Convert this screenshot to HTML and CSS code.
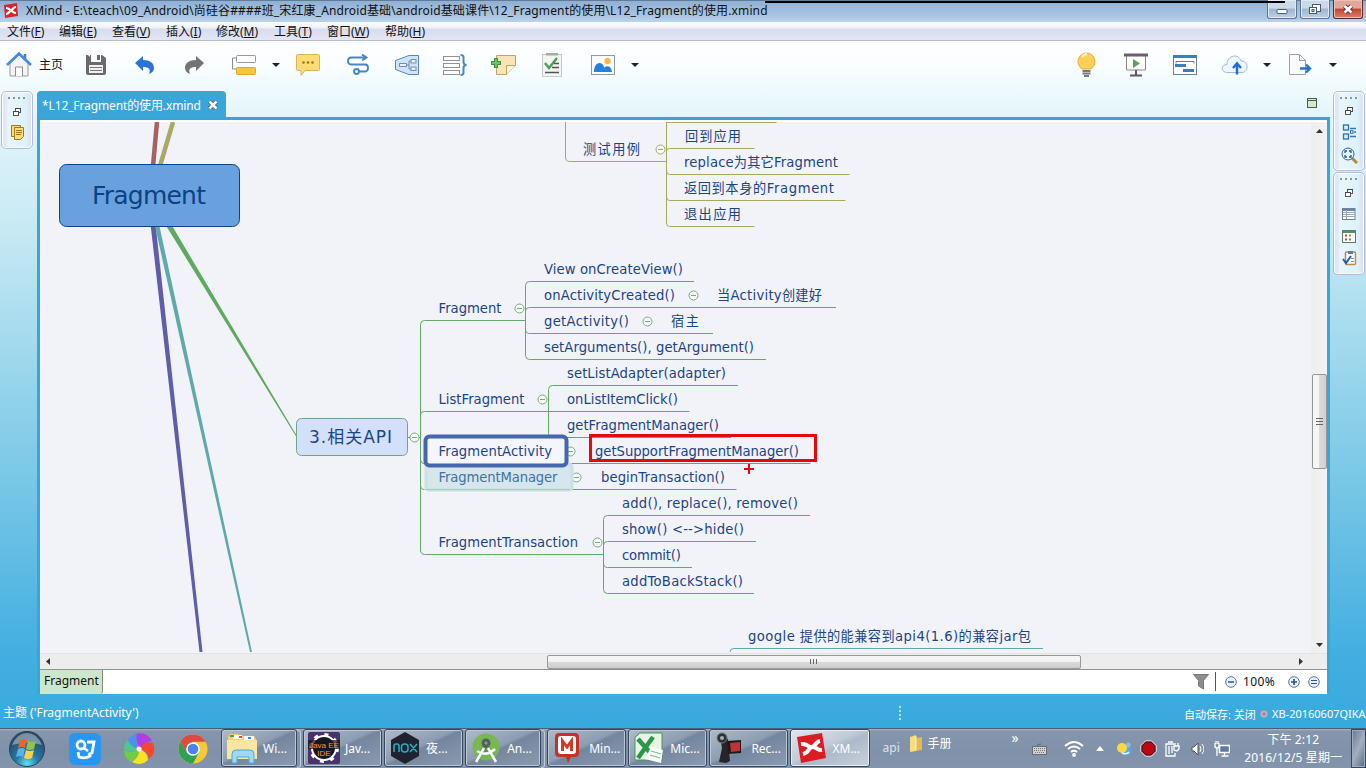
FILE: index.html
```html
<!DOCTYPE html>
<html lang="zh-CN">
<head>
<meta charset="utf-8">
<title>XMind</title>
<link rel="stylesheet" href="styles.css">
</head>
<body>
<header class="titlebar">
  <svg class="app-icon" width="16" height="18" viewBox="0 0 16 18"><path d="M1 3 14 1l1 13L2 16Z" fill="#d6262c"/><path d="M3 6c3 0 3 2 5 2s2-3 5-3M3 12c3 0 3-3 5-3s2 2 5 2" fill="none" stroke="#fff" stroke-width="2.2"/></svg>
  <span class="title-text">XMind - E:\teach\09_Android\尚硅谷####班_宋红康_Android基础\android基础课件\12_Fragment的使用\L12_Fragment的使用.xmind</span>
  <div class="window-buttons">
    <span class="wb"><svg width="28" height="18" viewBox="0 0 28 18"><rect x="9" y="9.500" width="10" height="4" rx="1" fill="#fff" stroke="#4b5a70"/></svg></span>
    <span class="wb"><svg width="28" height="18" viewBox="0 0 28 18"><g fill="#fff" stroke="#4b5a70"><rect x="11.500" y="4.500" width="8" height="7"/><rect x="8.500" y="7.500" width="7" height="6"/><rect x="11" y="9.500" width="2" height="2" fill="#8aa3c2"/></g></svg></span>
    <span class="wb close"><svg width="28" height="18" viewBox="0 0 28 18"><path d="m10.500 6 7 6.500m0-6.500-7 6.500" stroke="#59373c" stroke-width="4.500"/><path d="m10.500 6 7 6.500m0-6.500-7 6.500" stroke="#fff" stroke-width="2.600"/></svg></span>
  </div>
  <i class="record-line"></i>
</header>
<nav class="menubar">
  <span>文件(<u>F</u>)</span><span>编辑(<u>E</u>)</span><span>查看(<u>V</u>)</span><span>插入(<u>I</u>)</span><span>修改(<u>M</u>)</span><span>工具(<u>T</u>)</span><span>窗口(<u>W</u>)</span><span>帮助(<u>H</u>)</span>
</nav>
<div class="shell">
<div class="toolbar">
  <div class="tools tools-left">
    <svg width="26" height="28" viewBox="0 0 26 28"><path d="M4 12v13h18V12L13 4Z" fill="#f4f4f4" stroke="#9a9a9a"/><path d="M9.500 25v-9h7v9" fill="#fff" stroke="#8c8c8c"/><path d="M19 3v6" stroke="#3c82c8" stroke-width="2.500"/><path d="M1 14 13 2.500 25 14" fill="none" stroke="#3f8be0" stroke-width="2.600"/></svg>
    <span class="home-label">主页</span>
    <svg width="22" height="22" viewBox="0 0 22 22"><path d="M1 1h2l2 2V1h12l4 3v15q0 2-2 2H3q-2 0-2-2Z" fill="#6b6b6b"/><path d="M6 0h10v8H6Z" fill="#fafafa"/><path d="M12 1h3v5h-3Z" fill="#6b6b6b"/><path d="M4 11h14v8H4Z" fill="#f3f3f3"/><path d="M5 13.500h12M5 16.500h12" stroke="#777"/></svg>
    <svg width="20" height="20" viewBox="0 0 20 20"><path d="M0 8 8 1v4c7 0 11 3 11 8 0 3-2 5-5 6 2-5 0-7-6-7v4Z" fill="#2d73d6"/></svg>
    <svg width="20" height="20" viewBox="0 0 20 20"><path d="M20 8 12 1v4C5 5 1 8 1 13c0 3 2 5 5 6-2-5 0-7 6-7v4Z" fill="#747474"/></svg>
    <svg width="26" height="22" viewBox="0 0 26 22"><path d="M6 4H1.500v11H5" fill="none" stroke="#8b8b8b"/><rect x="5.500" y="1.500" width="19" height="7" rx="1" fill="#fff" stroke="#999"/><rect x="5.500" y="13.500" width="19" height="7" rx="1" fill="#fdc33c" stroke="#e0a52c"/></svg>
    <svg width="10" height="6"><path d="M1 1h8L5 5Z" fill="#222"/></svg>
    <svg width="26" height="24" viewBox="0 0 26 24"><path d="M2.500 1.500h21q1 0 1 1v14q0 1-1 1H10l-4 5v-5H2.500q-1 0-1-1v-14q0-1 1-1Z" fill="#ffdc74" stroke="#dfb457"/><g fill="#9a7428"><circle cx="8.500" cy="9.500" r="1.300"/><circle cx="13" cy="9.500" r="1.300"/><circle cx="17.500" cy="9.500" r="1.300"/></g></svg>
    <svg width="24" height="22" viewBox="0 0 24 22" fill="none" stroke="#4387c8" stroke-width="1.900"><path d="M20 3.500H5.500Q2 3.500 2 7t3.500 3.500H19q3 0 3 3.500t-3.500 3.500H13M16 .5l4.500 3L16 6.500"/><circle cx="10.500" cy="17.500" r="2.500" fill="#fff"/></svg>
    <svg width="26" height="22" viewBox="0 0 26 22"><path d="M1.500 6.500 15 1.500h9.500v19H15l-13.500-5Z" fill="#d0e4f8" stroke="#5687bb"/><g fill="#e6f0fa" stroke="#6d8fb5"><path d="M12 11h3m3-4h-3v8h3" fill="none"/><rect x="5.500" y="9.500" width="7" height="3"/><rect x="17" y="5.500" width="5" height="3.500"/><rect x="17" y="13" width="5" height="3.500"/></g></svg>
    <svg width="26" height="24" viewBox="0 0 26 24" fill="none"><g stroke="#929292" fill="#fff"><rect x="1.500" y="3.500" width="16" height="4"/><rect x="1.500" y="10.500" width="16" height="4"/><rect x="1.500" y="17.500" width="16" height="4"/></g><path d="M18.500 2q3 0 3 2v5q0 3 3 3-3 0-3 3v5q0 2-3 2" stroke="#4387c8" stroke-width="2"/></svg>
    <svg width="26" height="24" viewBox="0 0 26 24"><path d="M5.500 2.500h19v10l-9 9h-10Z" fill="#f8e4b5" stroke="#c1a568"/><path d="M15.500 21.500v-9h9" fill="#fff3d4" stroke="#c1a568"/><path d="M5 5v10M0 10h10" stroke="#3f9147" stroke-width="4"/><path d="M5 6v8M1 10h8" stroke="#67c36a" stroke-width="2"/></svg>
    <svg class="tool-task" width="22" height="26" viewBox="0 0 22 26"><rect x="1.500" y="2.500" width="19" height="22" fill="#f4f4f2" stroke="#c8c8c8"/><path d="M5 1h12v2.500H5Z" fill="#b1aa9b"/><path d="m4 11 4 5 8-10" fill="none" stroke="#48a054" stroke-width="2.400"/><path d="M13 11.500h5M11 15.500h7M4 20.500h14" stroke="#555" stroke-width="1.300"/></svg>
    <svg width="26" height="22" viewBox="0 0 26 22"><rect x="1.500" y="1.500" width="23" height="19" fill="#fafdff" stroke="#8e9aa4"/><circle cx="17.500" cy="7" r="3.200" fill="#fdb948"/><path d="M4 18c0-5 2-9 5.500-9 3 0 4 3 5 4.500C18 10 22 14 22 18Z" fill="#287fdc"/></svg>
    <svg width="10" height="6"><path d="M1 1h8L5 5Z" fill="#222"/></svg>
  </div>
  <div class="tools tools-right">
    <svg width="22" height="26" viewBox="0 0 22 26"><path d="M6 17C4 15 2 13 2 9.500a8.500 8.500 0 0 1 17 0c0 3.500-2 5.500-4 7.500Z" fill="#ffcf56" stroke="#e6a83c"/><path d="M6 5q2-3 5-3" fill="none" stroke="#fff3c4" stroke-width="2"/><path d="M6.500 19h8M6.500 21.500h8M8 24h5" stroke="#75787c" stroke-width="2"/></svg>
    <svg width="26" height="24" viewBox="0 0 26 24"><path d="M3.500 3v14h19V3" fill="#fff" stroke="#8b8580"/><path d="M1 2h24" stroke="#6b5f68" stroke-width="3"/><path d="m10 6 7 4.500-7 4.500Z" fill="#55a45b"/><path d="M13 17v5M7 22.500h12" stroke="#5f5a60" stroke-width="2"/></svg>
    <svg width="26" height="22" viewBox="0 0 26 22"><rect x="1.500" y="1.500" width="23" height="19" fill="#fff" stroke="#68809a"/><path d="M1 2.500h24" stroke="#3d7db8" stroke-width="3"/><path d="M4 9.500V7.500h18v2" fill="none" stroke="#777"/><path d="M3 11.500h11M11 16.500h11" stroke="#3c7dbb" stroke-width="3"/></svg>
    <svg width="28" height="22" viewBox="0 0 28 22"><path d="M7 18.500c-8 0-7-8-1-8C6 1 18-1 20 7c8 0 8 11 1 11.500Z" fill="#edf6fc" stroke="#9dbbd0"/><path d="M16 20.500V11" stroke="#2868d9" stroke-width="2.500"/><path d="m12 14 4-4.500 4 4.500" fill="none" stroke="#2868d9" stroke-width="2.500"/></svg>
    <svg width="10" height="6"><path d="M1 1h8L5 5Z" fill="#222"/></svg>
    <svg width="24" height="24" viewBox="0 0 24 24"><path d="M1.500 1.500h10l6 6v14h-16Z" fill="#fafafa" stroke="#a0a0a0"/><path d="M11.500 1.500v6h6" fill="none" stroke="#a0a0a0"/><path d="M12 15.500h10m-4-4 4 4-4 4" fill="none" stroke="#2371c4" stroke-width="2.400"/></svg>
    <svg width="10" height="6"><path d="M1 1h8L5 5Z" fill="#222"/></svg>
  </div>
</div>
<div class="workspace">
  <aside class="rail">
    <div class="panel panel-left">
      <i class="grip"></i>
      <svg width="10" height="10" viewBox="0 0 10 10"><g fill="#fff" stroke="#555"><rect x="3.500" y="1.500" width="5" height="4"/><rect x="1.500" y="4.500" width="5" height="4"/></g><path d="M3 1.500h6M1 4.500h6" stroke="#444"/></svg>
      <svg width="15" height="16" viewBox="0 0 15 16"><g fill="#ffdb78" stroke="#a4771f"><path d="M1.500.5h9v11h-9Z"/><path d="M4.500 2.500h9v9l-3 3h-6Z"/></g><path d="M6 5.500h6M6 7.500h6M6 9.500h5" stroke="#a4771f"/></svg>
    </div>
  </aside>
  <main class="editor">
    <div class="tabs">
      <div class="tab"><span>*L12_Fragment的使用.xmind</span><svg width="12" height="12" viewBox="0 0 12 12"><path d="m2.500 2.500 7 7m0-7-7 7" stroke="#57594f" stroke-width="4"/><path d="m2.500 2.500 7 7m0-7-7 7" stroke="#fff" stroke-width="2.500"/></svg></div>
      <svg class="maximize" width="10" height="10" viewBox="0 0 10 10"><rect x=".5" y=".5" width="9" height="9" fill="#d3e8cd" stroke="#4f5d50"/><path d="M1 2.500h8" stroke="#4f5d50"/></svg>
    </div>
    <div class="frame">
      <div class="view">
        <svg class="map" width="1271" height="530" viewBox="40 122 1271 530">
          <g fill="none">
            <path d="m157 122-4 44" stroke="#a8605f" stroke-width="4.500"/>
            <path d="m173 122-13 44" stroke="#a9a964" stroke-width="4.500"/>
            <path d="M150.500 224h5l47 428h-3Z" fill="#5f5caa"/>
            <path d="M154.500 224h4.500l93 428h-2Z" fill="#5fa9aa"/>
            <path d="M165 224h6l126 212v2Z" fill="#5faa60"/>
            <g stroke="#a5a85f"><path d="M565.500 122v35q0 4.500 4 4.500h97M666.500 122v101q0 3.500 3 3.500h85M666.500 122.500h110M666.500 151q0-2.500 3-2.500h85M666.500 171q0 3.500 3 3.500h180M666.500 197q0 3.500 3 3.500h176"/></g>
            <g stroke="#63a865">
              <path d="M408 437.500h13M525.500 320.500h-101q-4 0-4 4V550q0 4.500 4 4.500h179M420.500 415q0-3.500 4-3.500h265M420.500 459q0 4.500 4 4.500h386M420.500 485q0 4.500 4 4.500h312"/>
              <path d="M694 281.500H529.500q-4 0-4 4v70q0 4 4 4H766M525.500 311q0-3.500 4-3.500H836M525.500 329q0 4.500 4 4.500H713"/>
              <path d="M738 385.500H552.500q-4 0-4 4v44q0 4 4 4H731"/>
              <path d="M810 515.500H607.500q-4 0-4 4v70q0 4 4 4H754M603.500 545q0-3.500 4-3.500H756M603.500 563q0 4.500 4 4.500H692"/>
            </g>
            <path d="M730 652q0-3.500 4-3.500h309" stroke="#5fa9aa"/>
          </g>
          <rect x="59.500" y="164.500" width="180" height="62" rx="7" fill="#69a1df" stroke="#0b4487"/>
          <rect x="296.500" y="418.500" width="111" height="37" rx="5" fill="#d2e0fc" stroke="#6fa487"/>
          <g class="folds" stroke="#78aa7c" fill="#f6f8f9">
            <circle cx="660.500" cy="149.500" r="4.500" stroke="#a5a85f"/><path d="M658 149.500h5" stroke="#a5a85f"/>
            <circle cx="414.500" cy="437.500" r="4.500"/><path d="M412 437.500h5"/>
            <circle cx="519.500" cy="308.500" r="4.500"/><path d="M517 308.500h5"/>
            <circle cx="693.500" cy="295.500" r="4.500"/><path d="M691 295.500h5"/>
            <circle cx="647.500" cy="321.500" r="4.500"/><path d="M645 321.500h5"/>
            <circle cx="542.500" cy="399.500" r="4.500"/><path d="M540 399.500h5"/>
            <circle cx="570.500" cy="451.500" r="4.500"/><path d="M568 451.500h5"/>
            <circle cx="576.500" cy="477.500" r="4.500"/><path d="M574 477.500h5"/>
            <circle cx="597.500" cy="542.500" r="4.500"/><path d="M595 542.500h5"/>
          </g>
          <rect x="426" y="464" width="146" height="26" rx="3" fill="#d6e6ec" stroke="#cbdfe7" stroke-width="3"/>
          <path d="M424 489.500h146" stroke="#a9cdb8"/>
          <rect x="425.500" y="436.500" width="141" height="29" rx="4" fill="#f5f5fc" stroke="#4267ac" stroke-width="4"/>
          <text class="root" x="92" y="204" textLength="114">Fragment</text>
          <text class="main-topic" x="309" y="443" textLength="83">3.相关API</text>
          <g class="topic">
            <text x="583" y="154" textLength="57">测试用例</text>
            <text x="685" y="141" textLength="56">回到应用</text>
            <text x="684" y="167" textLength="154">replace为其它Fragment</text>
            <text x="684" y="193" textLength="150">返回到本身的Fragment</text>
            <text x="684" y="219" textLength="57">退出应用</text>
            <text x="544" y="274" textLength="139">View onCreateView()</text>
            <text x="544" y="300" textLength="131">onActivityCreated()</text>
            <text x="717" y="300" textLength="105">当Activity创建好</text>
            <text x="438.500" y="313" textLength="63">Fragment</text>
            <text x="544" y="326" textLength="85">getActivity()</text>
            <text x="671" y="326" textLength="28">宿主</text>
            <text x="544" y="352" textLength="210">setArguments(), getArgument()</text>
            <text x="567" y="378" textLength="159">setListAdapter(adapter)</text>
            <text x="438.500" y="404" textLength="86">ListFragment</text>
            <text x="567" y="404" textLength="111">onListItemClick()</text>
            <text x="567" y="430" textLength="152">getFragmentManager()</text>
            <text x="438.500" y="456" textLength="113.500">FragmentActivity</text>
            <text x="595" y="456" textLength="204">getSupportFragmentManager()</text>
            <text x="438.500" y="482" textLength="119" class="ghost">FragmentManager</text>
            <text x="601" y="482" textLength="124">beginTransaction()</text>
            <text x="622" y="508" textLength="176">add(), replace(), remove()</text>
            <text x="622" y="534" textLength="122">show() &lt;--&gt;hide()</text>
            <text x="438.500" y="547" textLength="139.500">FragmentTransaction</text>
            <text x="622" y="560" textLength="59">commit()</text>
            <text x="622" y="586" textLength="121">addToBackStack()</text>
            <text x="748" y="641" textLength="283">google 提供的能兼容到api4(1.6)的兼容jar包</text>
          </g>
          <rect x="590.500" y="435.500" width="225" height="25" fill="none" stroke="#e5080d" stroke-width="3"/>
          <path d="M749 464v10M744 469h10" stroke="#e5080d" stroke-width="2"/>
        </svg>
        <div class="vscroll">
          <svg width="7" height="4"><path d="M0 4 3.500 0 7 4Z" fill="#333"/></svg>
          <div class="vthumb"><i></i></div>
          <svg width="7" height="4"><path d="M0 0h7L3.500 4Z" fill="#333"/></svg>
        </div>
      </div>
      <div class="hscroll">
        <svg width="4" height="7"><path d="M4 0v7L0 3.500Z" fill="#333"/></svg>
        <div class="hthumb"><i></i></div>
        <svg width="4" height="7"><path d="M0 0v7l4-3.500Z" fill="#333"/></svg>
      </div>
      <div class="sheetbar">
        <span class="sheet">Fragment</span>
        <div class="zoombar">
          <svg width="16" height="16" viewBox="0 0 16 16"><path d="M.5.500h15l-5 6V15l-5-3V6.500Z" fill="#8d8d8d" stroke="#777"/></svg>
          <i class="sep"></i>
          <svg width="12" height="12" viewBox="0 0 12 12"><circle cx="6" cy="6" r="5.300" fill="#eaf3fc" stroke="#5474a4"/><path d="M3 6h6" stroke="#2b5592" stroke-width="1.500"/></svg>
          <span class="percent">100%</span>
          <svg width="12" height="12" viewBox="0 0 12 12"><circle cx="6" cy="6" r="5.300" fill="#eaf3fc" stroke="#5474a4"/><path d="M3 6h6M6 3v6" stroke="#2b5592" stroke-width="1.700"/></svg>
          <svg class="fit" width="12" height="12" viewBox="0 0 12 12"><circle cx="6" cy="6" r="5.300" fill="#eaf3fc" stroke="#5474a4"/><path d="M3 4.500h6M3 7.500h6" stroke="#2b5592"/></svg>
        </div>
      </div>
    </div>
  </main>
  <aside class="rail rail-right">
    <div class="panel panel-outline">
      <i class="grip"></i>
      <svg width="10" height="10" viewBox="0 0 10 10"><g fill="#fff" stroke="#555"><rect x="3.500" y="1.500" width="5" height="4"/><rect x="1.500" y="4.500" width="5" height="4"/></g><path d="M3 1.500h6M1 4.500h6" stroke="#444"/></svg>
      <svg width="15" height="16" viewBox="0 0 15 16"><g fill="#d9f1fc" stroke="#2c6fb2" stroke-width="1.300"><rect x="1.500" y="1" width="5" height="5"/><rect x="1.500" y="10" width="5" height="5"/></g><path d="M8 4.500h6M8 12.500h6M12 8h2" stroke="#3079b5" stroke-width="1.300"/><rect x="8.500" y="6.800" width="2.500" height="2.500" fill="#fff" stroke="#2b6fab"/></svg>
      <svg width="17" height="17" viewBox="0 0 17 17"><path d="m11 11 5 5" stroke="#b38a3c" stroke-width="3"/><circle cx="7" cy="7" r="6" fill="#e4f4fc" stroke="#38689b"/><path d="M4 6V4h2m2 0h2v2m0 2v2H8M6 10H4V8" fill="none" stroke="#245594" stroke-width="1.300"/></svg>
    </div>
    <div class="panel panel-views">
      <i class="grip"></i>
      <svg width="10" height="10" viewBox="0 0 10 10"><g fill="#fff" stroke="#555"><rect x="3.500" y="1.500" width="5" height="4"/><rect x="1.500" y="4.500" width="5" height="4"/></g><path d="M3 1.500h6M1 4.500h6" stroke="#444"/></svg>
      <svg width="14" height="12" viewBox="0 0 14 12"><rect x=".5" y=".5" width="12.500" height="11" fill="#fff" stroke="#6c8297"/><path d="M1 2h12" stroke="#6786a3" stroke-width="2"/><path d="M1 4.500h12M1 6.500h12M1 8.500h12M4.500 2v9" stroke="#9aa6ba"/></svg>
      <svg width="14" height="13" viewBox="0 0 14 13"><rect x=".5" y=".5" width="13" height="12" fill="#fff" stroke="#5a8268"/><path d="M1 2h12" stroke="#4d9267" stroke-width="2"/><path d="M3 5.500h2M3 9.500h2" stroke="#d33" stroke-width="2"/><path d="M7 5.500h2" stroke="#e57b2a" stroke-width="2"/><path d="M7 9.500h2" stroke="#36a35c" stroke-width="2"/></svg>
      <svg width="15" height="16" viewBox="0 0 15 16"><rect x="3.500" y="2" width="10" height="12.500" rx="1" fill="#fafcff" stroke="#c08b43" stroke-width="1.500"/><path d="M6 1h5v3H6Z" fill="#597ea0"/><path d="m1 9 3 4 5-7" fill="none" stroke="#215ca6" stroke-width="2"/><path d="M9 8.500h3M9 11.500h3" stroke="#7792ad"/></svg>
    </div>
  </aside>
</div>
<div class="statusbar">
  <span class="selection">主题 ('FragmentActivity')</span>
  <i class="status-grip"></i>
  <span class="autosave">自动保存: 关闭</span><i class="dot"></i><span class="host">XB-20160607QIKA</span>
</div>
</div>
<footer class="taskbar">
  <div class="pinned">
    <svg width="38" height="38" viewBox="0 0 38 38"><defs><radialGradient id="orb" cx="50%" cy="92%" r="80%"><stop offset="0" stop-color="#5fe0f4"/><stop offset=".4" stop-color="#247aa8"/><stop offset="1" stop-color="#2b4863"/></radialGradient></defs><circle cx="19" cy="19" r="17.500" fill="url(#orb)" stroke="#27425c"/><path d="M4 15Q9 3 19 3t15 12q-14-5-30 0Z" fill="#c5d8e3" opacity=".5"/><path d="M12 10q4-2 7 0l-2 8q-3-2-7 0Z" fill="#e8652c"/><path d="M20 11q4 2 8 0l-2 8q-4 2-8 0Z" fill="#8cc548"/><path d="M10 19q4-2 7 0l-2 8q-3-2-7 0Z" fill="#58b3ea"/><path d="M18 20q4 2 8 0l-2 8q-4 2-8 0Z" fill="#fbd14b"/></svg>
    <svg width="34" height="32" viewBox="0 0 34 32"><rect x="1" width="32" height="32" rx="6" fill="#2696f0"/><g fill="none" stroke="#fff" stroke-width="2.800"><circle cx="13" cy="12" r="4"/><path d="m16 15 4 3M19 9h7l-2 11-3 1M10 19l1 5q6 2 11-1l-1-3"/></g></svg>
    <svg width="32" height="32" viewBox="-16 -16 32 32"><path d="M0 0-4-15Q8-18 13-8Q8-8 0 0Z" fill="#b03ee4"/><path d="M0 0Q6-9 14-6Q18 4 10 10Q9 2 0 0Z" fill="#f3482f"/><path d="M0 0Q9 3 9 11Q2 18-7 13Q0 8 0 0Z" fill="#fbe124"/><path d="M0 0Q0 10-8 13Q-15 9-15 1Q-7 5 0 0Z" fill="#70cc45"/><path d="M0 0Q-8 4-15 0Q-15-5-11-9Q-7-2 0 0Z" fill="#4fc98a"/><path d="M0 0Q-9-2-11-9Q-8-14-2-15Q-4-6 0 0Z" fill="#4b91ee"/><circle r="2.500" fill="#fff"/></svg>
    <svg width="30" height="30" viewBox="-15 -15 30 30"><circle r="14.500" fill="#f6c935"/><path d="M-12.600-7.200A14.500 14.500 0 0 1 12.600-7.200H0L-6 4Z" fill="#de4b3f"/><path d="M-12.600-7.200A14.500 14.500 0 0 0 0 14.500L6 3.500H-6Z" fill="#30a053"/><circle r="6.800" fill="#fff"/><circle r="5.300" fill="#4686ec"/></svg>
  </div>
  <div class="tasks">
    <div class="task stacked"><svg width="32" height="32" viewBox="0 0 32 32"><path d="M2 5 4 2h8l2 2h14l2 3v20H2Z" fill="#f0cf76"/><path d="M7 3h9v4H7ZM18 4h10v4H18Z" fill="#f9fafb"/><path d="M4 3h4v2H4Z" fill="#4aa052"/><path d="M13 4h3v2h-3Z" fill="#d24f43"/><path d="M22 5h3v2h-3Z" fill="#3b8fd2"/><path d="M1 8h30v19H1Z" fill="#fae6a0"/><path d="M6 31v-9q0-4 4-4h14q4 0 4 4v9h-5v-6H11v6Z" fill="#9bd9f5" stroke="#4fa9d6"/></svg><span>Wi...</span></div>
    <div class="task"><svg width="32" height="32" viewBox="0 0 32 32"><rect width="32" height="32" rx="2" fill="#493269"/><circle cx="16" cy="16" r="13.500" fill="none" stroke="#fff" stroke-width="3" stroke-dasharray="4 6.600"/><circle cx="16" cy="16" r="12" fill="#1a1722" stroke="#fff" stroke-width="2"/><rect y="8" width="32" height="9" fill="#1a1722" opacity=".75"/><text class="jee" x="16" y="15.500">Java EE</text><text class="jee" x="16" y="24">IDE</text></svg><span>Jav...</span></div>
    <div class="task"><svg width="32" height="32" viewBox="0 0 32 32"><path d="m16 0 14 8v16l-14 8-14-8V8Z" fill="#20232f"/><g fill="none" stroke="#2aa9b8" stroke-width="1.600"><path d="M5 20v-6q0-2 2-2h1q2 0 2 2v6M21 12l7 8m0-8-7 8"/><rect x="12.500" y="12" width="6.500" height="8" rx="3"/></g></svg><span>夜...</span></div>
    <div class="task stacked"><svg width="32" height="32" viewBox="0 0 32 32"><circle cx="16" cy="15" r="13.500" fill="#79b850"/><path d="m16 8 8 15-8-2-8 2Z" fill="#4b5d50" opacity=".5"/><path d="m14 16-8 14M18 16l8 14M7 19q9 6 18-2" stroke="#f8fafa" stroke-width="2.600" fill="none"/><circle cx="16" cy="11" r="4.500" fill="#555f62"/><circle cx="16" cy="11" r="1.500" fill="#87ab72"/></svg><span>An...</span></div>
    <div class="task"><svg width="32" height="32" viewBox="0 0 32 32"><path d="M7 1h16q4 0 4 4v16q0 4-4 4h-4l-3 6-2-6H7q-4 0-4-4V5q0-4 4-4Z" fill="#c93025"/><rect x="6" y="4" width="18" height="18" rx="3" fill="#fff"/><path d="M10.500 19V9l4.500 6 4.500-6v10" fill="none" stroke="#cf3a28" stroke-width="3"/></svg><span>Min...</span></div>
    <div class="task"><svg width="32" height="32" viewBox="0 0 32 32"><path d="M5 3q0-2 2-2h22v27H2V5Z" fill="#e7f4e5" stroke="#489457"/><path d="m5 7 16 18M20 5 5 26" stroke="#2b964a" stroke-width="4.500"/><path d="m18 15 12 3-2 13-16-4Z" fill="#f7fcf6"/><path d="m18 19 10 3m-11 1 10 3" stroke="#80b584"/></svg><span>Mic...</span></div>
    <div class="task"><svg width="32" height="32" viewBox="0 0 32 32"><path d="m6 5 8 2 2 22-4 2-7-1 3-14Z" fill="#252528"/><circle cx="8" cy="6" r="5" fill="#303034" stroke="#777"/><circle cx="8" cy="6" r="2" fill="#a9aeb4"/><path d="m13 9 14-1v13l-13 1Z" fill="#1c1c20"/><path d="m16 11 10-1v9l-9 1Z" fill="#c53234"/></svg><span>Rec...</span></div>
    <div class="task active"><svg width="32" height="32" viewBox="0 0 32 32"><path d="m2 5 25-4 4 25-25 5Z" fill="#d91d22"/><path d="M6 12c7-1 7 4 11 3s3-5 8-6M8 22c6-1 5-6 9-7s5 4 10 3" fill="none" stroke="#fff" stroke-width="4"/></svg><span>XM...</span></div>
  </div>
  <div class="deskband"><span class="api">api</span><svg width="14" height="18" viewBox="0 0 14 18"><path d="m1 2 6-2v16l-6 1Z" fill="#f7dc82"/><path d="m7 3 6-1v13l-6 1Z" fill="#e0bd50"/><path d="M7 1v14" stroke="#fff2bc"/></svg><span>手册</span></div>
  <div class="tray">
    <span class="more">»</span>
    <svg width="15" height="12" viewBox="0 0 15 12"><path d="M5 3q0-2 4-2" fill="none" stroke="#666"/><rect x=".5" y="3.500" width="14" height="8" fill="#d0d2d5" stroke="#696c70"/><path d="M2 5.500h11M2 7.500h11M3 9.500h9" stroke="#777" stroke-dasharray="1 1"/></svg>
    <svg width="20" height="18" viewBox="0 0 20 18" fill="none" stroke="#fff" stroke-width="1.800"><path d="M1 6Q10-2 19 6M4 9q6-5 12 0M7 12q3-2.500 6 0"/><circle cx="10" cy="15" r="1"/></svg>
    <svg width="8" height="5"><path d="M0 5 4 0l4 5Z" fill="#fff"/></svg>
    <svg width="16" height="16" viewBox="0 0 16 16"><circle cx="11" cy="10" r="4.500" fill="#58a9e6"/><circle cx="12" cy="4" r="2.500" fill="#83c0ec"/><circle cx="6" cy="7" r="5" fill="#fdd748"/><path d="M6 12q5 2 7-1" stroke="#e6f3fb" stroke-width="1.500" fill="none"/></svg>
    <svg width="17" height="17" viewBox="0 0 17 17"><path d="M5.500 1h6L16 5.500v6L11.500 16h-6L1 11.500v-6Z" fill="#bd0712" stroke="#fff"/><path d="M5.800 2h5.400L15 5.800v5.400L11.200 15H5.800L2 11.200V5.800Z" fill="none" stroke="#29181e"/></svg>
    <svg width="15" height="16" viewBox="0 0 15 16" fill="none" stroke="#fff" stroke-width="1.300"><path d="M9 3H1v12h9v-3M3 1h5M4 5v8M7 5v7M9 5h5v3l-2 2-3-1ZM10 2v3m3-3v3"/></svg>
    <svg width="13" height="14" viewBox="0 0 13 14"><path d="M1 5h2l4-4v12L3 9H1Z" fill="#fff" stroke="#555"/><path d="M9 4q2 3 0 6m2-8q4 5 0 10" stroke="#fff" fill="none"/></svg>
    <svg width="16" height="16" viewBox="0 0 16 16" fill="none" stroke="#fff"><rect x="5.500" y="4.500" width="10" height="7" stroke-width="1.500" fill="#60799b"/><path d="M10.500 12v2m-3 1h7M1 2v3q0 2 2 2v8M5 2v3q0 2-2 2M2 0v3m2-3v3" stroke-width="1.300"/></svg>
  </div>
  <div class="clock"><span>下午 2:12</span><span>2016/12/5 星期一</span></div>
  <div class="show-desktop"></div>
</footer>
</body>
</html>
```
FILE: styles.css
```css
* { box-sizing: border-box; }
html, body { margin: 0; width: 1366px; height: 768px; overflow: hidden; }
body { display: flex; flex-direction: column; font: 12px "Noto Sans", "Noto Sans CJK SC", sans-serif; color: #111; background: #fff; }
svg { display: block; flex: none; }
span { white-space: nowrap; }

.titlebar { position: relative; flex: none; height: 22px; display: flex; align-items: flex-start; background: linear-gradient(#34465e 0, #8fb0d4 1px, #9cbbdc 8px, #a9c5e2 16px, #bcd3ea); }
.app-icon { margin: 2px 0 0 3px; }
.title-text { margin-left: 7px; line-height: 21px; font-size: 12px; letter-spacing: .13px; }
.window-buttons { margin-left: auto; display: flex; gap: 3px; padding-right: 3px; }
.wb { width: 30px; height: 19px; border: 1px solid #5e7592; border-top: 0; border-radius: 0 0 3px 3px; background: linear-gradient(#ccd9e8 45%, #9db5d0 50%, #bdd1e6); box-shadow: inset 0 0 0 1px #e2ebf5; }
.wb.close { border-color: #582a34; background: linear-gradient(#e2a79b 45%, #c4432c 50%, #da806b); box-shadow: inset 0 0 0 1px #eec0b5; }
.record-line { position: absolute; left: 765px; top: 1px; width: 520px; height: 2px; background: #000; }

.menubar { flex: none; height: 19px; display: grid; grid-template-columns: 52px 53px 54px 50px 58px 53px 58px 53px; padding-left: 7px; background: linear-gradient(#fbfcfe, #eef0f9 6px, #d7dcee 7px, #e3e6f5); border-bottom: 1px solid #b6bccb; line-height: 19px; }
.menubar u { text-underline-offset: 1px; }

.shell { flex: 1; min-height: 0; display: flex; flex-direction: column; background: linear-gradient(#fff 0, #f9fdff 25px, #e2f5fb 78px, #c7e9f4 190px, #9ad6ec 330px, #66bfe4 500px, #43afe1 610px, #38a9dd); }
.toolbar { flex: none; height: 50px; display: flex; justify-content: space-between; align-items: flex-start; }
.tools { display: grid; align-items: center; justify-items: center; height: 48px; }
.tools-left { grid-template-columns: 38px 33px 49px 49px 49px 52px 12px 51px 49px 49px 47px 52px 47px 52px 12px; }
.tools-right { grid-template-columns: 49px 49px 49px 52px 12px 54px 39px; }
.tools-right svg:last-child { justify-self: start; margin-left: 1px; }
.tool-task { margin-left: -3px; }
.home-label { font-size: 12px; justify-self: start; padding-left: 1px; margin-top: -2px; }

.workspace { flex: none; height: 604px; display: flex; }
.rail { flex: none; width: 37px; }
.rail-right { width: 36px; padding-left: 3px; }
.panel { width: 32px; border: 1px solid #b3bbd6; border-radius: 5px; background: linear-gradient(90deg, #e1e7f7 4px, #e9f6fc 6px, #dcf2fa 24px, #dde4f6 27px); box-shadow: inset 0 0 0 1px #fff; display: flex; flex-direction: column; align-items: center; padding-top: 5px; }
.panel-left { margin-left: 1px; height: 58px; gap: 8px; }
.panel-outline { height: 80px; gap: 7px; }
.panel-outline svg:nth-of-type(2) { margin-top: 1px; }
.panel-views { height: 103px; margin-top: 1px; gap: 8px; }
.panel-views svg + svg { margin-top: 2px; }
.panel-views svg:last-child { margin-top: -1px; }
.grip { width: 18px; height: 2px; background: repeating-linear-gradient(90deg, #8d91a1 0 2px, transparent 2px 5px); }

.editor { width: 1293px; flex: none; }
.tabs { height: 27px; display: flex; justify-content: space-between; }
.tab { width: 189px; height: 27px; display: flex; align-items: center; gap: 6px; padding: 0 0 0 5px; color: #fff; background: #39a5d9; border-radius: 4px 4px 0 0; }
.tab span { width: 159px; letter-spacing: -.12px; padding-top: 1px; }
.maximize { margin: 7px 13px 0 0; }
.frame { border: 3px solid #3ba3ce; border-bottom: 1px solid #46a9d4; border-color: #3ba3ce #3ba5d4 #4aaedb; height: 577px; margin-top: -1px; background: #fff; padding-top: 2px; display: flex; flex-direction: column; }
.view { display: flex; flex: none; height: 531px; background: #f2f3f9; }
.map { font-family: "DejaVu Sans", "Noto Sans CJK SC", sans-serif; fill: #1b4583; }
.root { font-size: 25px; fill: #0b4283; }
.main-topic { font-size: 17px; }
.topic { font-family: Verdana, "DejaVu Sans", "Noto Sans CJK SC", sans-serif; font-size: 13.2px; }
.ghost { fill: #4372a0; }
.vscroll { width: 16px; display: flex; flex-direction: column; align-items: center; background: linear-gradient(90deg, #eee, #f4f2f2); padding: 7px 0 6px; }
.vthumb { margin: 241px 0 auto; width: 15px; height: 95px; border: 1px solid #979797; border-radius: 2px; background: linear-gradient(90deg, #f5f5f5 45%, #dadada 50%, #d0d0d0); display: grid; place-items: center; }
.vthumb i { width: 7px; height: 8px; background: repeating-linear-gradient(#666 0 1px, transparent 1px 3px); }
.hscroll { flex: none; height: 16px; display: flex; align-items: center; background: #ededed; padding: 0 24px 0 6px; border-top: 1px solid #e4e4e4; }
.hthumb { margin: 0 auto 0 497px; width: 534px; height: 14px; border: 1px solid #979797; border-radius: 2px; background: linear-gradient(#f5f5f5 45%, #dadada 50%, #cdcdcd); display: grid; place-items: center; }
.hthumb i { width: 8px; height: 5px; background: repeating-linear-gradient(90deg, #666 0 1px, transparent 1px 3px); }
.sheetbar { flex: none; height: 25px; display: flex; justify-content: space-between; border-top: 1px solid #8d9491; background: #fff; }
.sheet { width: 63px; padding-left: 4px; line-height: 22px; background: #cce7cb; border-right: 1px solid #7e8d80; border-radius: 0 0 3px 0; }
.zoombar { display: flex; align-items: center; padding: 0 7px 1px 0; }
.sep { width: 1px; height: 19px; background: #555; margin: 0 9px 0 6px; }
.percent { width: 51px; padding-left: 6px; letter-spacing: .4px; }
.fit { margin-left: 8px; }

.statusbar { flex: 1; display: flex; align-items: center; color: #fff; padding-left: 3px; }
.selection { width: 896px; font-size: 12px; }
.status-grip { width: 2px; height: 16px; margin: 4px 283px 0 0; background: repeating-linear-gradient(#bfe4f5 0 2px, transparent 2px 4px); }
.autosave { font-size: 11px; width: 76px; padding-top: 4px; }
.dot { flex: none; width: 8px; height: 8px; margin-top: 4px; border-radius: 50%; background: radial-gradient(#ad7f92 20%, #b5bfce 40%, #6a7996); }
.host { font-size: 11px; padding: 4px 0 0 4px; }

.taskbar { flex: none; height: 40px; display: flex; border-top: 1px solid #46607a; background: linear-gradient(#a9b6c7 0, #8495ac 2px, #8092aa 60%, #8394ac); color: #fff; }
.pinned { width: 221px; display: flex; align-items: center; padding-left: 8px; }
.pinned svg:nth-child(2) { margin-left: 22px; }
.pinned svg:nth-child(3) { margin-left: 21px; }
.pinned svg:nth-child(4) { margin-left: 23px; }
.tasks { display: flex; gap: 2px; }
.task { width: 79.100px; height: 38px; display: flex; align-items: center; gap: 5px; padding-left: 4px; border: 1px solid #37475f; border-radius: 3px; box-shadow: inset 0 0 0 1px #bdc8d6; background: linear-gradient(155deg, #aebaca, #8e9db2 45%, #74869f 50%, #8b9bb0); font-size: 12px; }
.task.stacked { position: relative; width: 76px; margin-right: 4px; }
.task.stacked::after { content: ""; position: absolute; right: -5px; top: 0; width: 3px; height: 36px; border: 1px solid #c2ccd8; border-left: 0; border-radius: 0 3px 3px 0; }
.task.active { background: linear-gradient(155deg, #e1e6ed, #c1cad7 45%, #adb9c9 55%, #c9d1dd); box-shadow: inset 0 0 0 1px #e9edf2; }
.jee { font: 8px "Liberation Sans", Arial, sans-serif; fill: #ff9436; text-anchor: middle; }
.deskband { display: flex; width: 121px; padding-left: 13px; }
.deskband .api { padding-top: 10px; width: 26px; color: #dce2e9; }
.deskband svg { margin: 6px 5px 0 0; }
.deskband span:last-child { padding-top: 5px; }
.tray { display: flex; align-items: center; width: 236px; padding-left: 21px; }
.tray .more { align-self: flex-start; flex: none; font-size: 14px; width: 20px; line-height: 17px; }
.tray svg:nth-of-type(2) { margin-left: 17px; }
.tray svg:nth-of-type(3) { margin-left: 12px; }
.tray svg:nth-of-type(4) { margin-left: 12px; }
.tray svg:nth-of-type(5) { margin-left: 8px; }
.tray svg:nth-of-type(6) { margin-left: 8px; }
.tray svg:nth-of-type(7) { margin-left: 11px; }
.tray svg:nth-of-type(8) { margin-left: 10px; }
.clock { flex: 1; display: flex; flex-direction: column; align-items: center; padding: 2px 0 0 9px; line-height: 18px; font-size: 12px; letter-spacing: .15px; }
.show-desktop { width: 15px; border: 1px solid #36465c; background: linear-gradient(115deg, #66788f, #a2afbf 50%, #566a84); box-shadow: inset 0 0 0 1px #9eacbd; }
```
